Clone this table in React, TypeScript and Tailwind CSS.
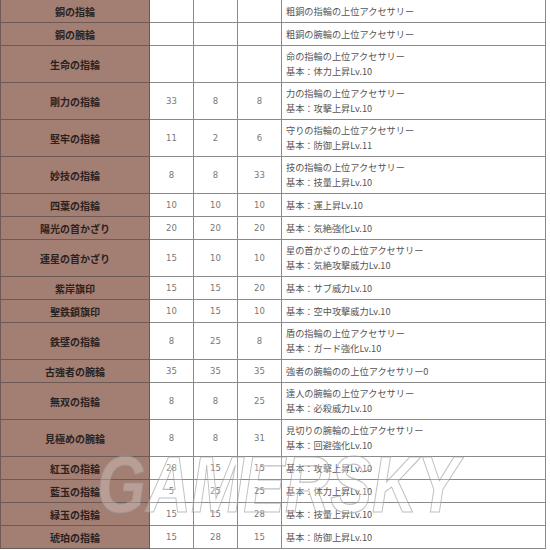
type Row = {
  name: string;
  stats?: [number, number, number];
  lines: string[];
};

const rows: Row[] = [
  { name: "銅の指輪", lines: ["粗銅の指輪の上位アクセサリー"] },
  { name: "銅の腕輪", lines: ["粗銅の腕輪の上位アクセサリー"] },
  { name: "生命の指輪", lines: ["命の指輪の上位アクセサリー", "基本：体力上昇Lv.10"] },
  { name: "剛力の指輪", stats: [33, 8, 8], lines: ["力の指輪の上位アクセサリー", "基本：攻撃上昇Lv.10"] },
  { name: "堅牢の指輪", stats: [11, 2, 6], lines: ["守りの指輪の上位アクセサリー", "基本：防御上昇Lv.11"] },
  { name: "妙技の指輪", stats: [8, 8, 33], lines: ["技の指輪の上位アクセサリー", "基本：技量上昇Lv.10"] },
  { name: "四葉の指輪", stats: [10, 10, 10], lines: ["基本：運上昇Lv.10"] },
  { name: "陽光の首かざり", stats: [20, 20, 20], lines: ["基本：気絶強化Lv.10"] },
  { name: "連星の首かざり", stats: [15, 10, 10], lines: ["星の首かざりの上位アクセサリー", "基本：気絶攻撃威力Lv.10"] },
  { name: "紫岸旗印", stats: [15, 15, 20], lines: ["基本：サブ威力Lv.10"] },
  { name: "聖鉄鎖旗印", stats: [10, 15, 10], lines: ["基本：空中攻撃威力Lv.10"] },
  { name: "鉄壁の指輪", stats: [8, 25, 8], lines: ["盾の指輪の上位アクセサリー", "基本：ガード強化Lv.10"] },
  { name: "古強者の腕輪", stats: [35, 35, 35], lines: ["強者の腕輪のの上位アクセサリー0"] },
  { name: "無双の指輪", stats: [8, 8, 25], lines: ["達人の腕輪の上位アクセサリー", "基本：必殺威力Lv.10"] },
  { name: "見極めの腕輪", stats: [8, 8, 31], lines: ["見切りの腕輪の上位アクセサリー", "基本：回避強化Lv.10"] },
  { name: "紅玉の指輪", stats: [28, 15, 15], lines: ["基本：攻撃上昇Lv.10"] },
  { name: "藍玉の指輪", stats: [5, 25, 25], lines: ["基本：体力上昇Lv.10"] },
  { name: "緑玉の指輪", stats: [15, 15, 28], lines: ["基本：技量上昇Lv.10"] },
  { name: "琥珀の指輪", stats: [15, 28, 15], lines: ["基本：防御上昇Lv.10"] },
];

export default function App() {
  return (
    <div className="relative h-[550px] w-[550px] overflow-hidden bg-white font-['DejaVu_Sans','Noto_Sans_CJK_JP',sans-serif]">
      <table className="-mt-px w-[546px] table-fixed border-collapse">
        <colgroup>
          <col className="w-[149px]" />
          <col className="w-[44px]" />
          <col className="w-[44px]" />
          <col className="w-[44px]" />
          <col />
        </colgroup>
        <tbody>
          {rows.map((r) => {
            const tall = r.lines.length > 1;
            return (
              <tr key={r.name} className={tall ? "h-[37px]" : "h-[23px]"}>
                <td className="border border-[#6e5a55] bg-[#a37e73] p-0 text-center font-['Noto_Sans_CJK_JP',sans-serif] text-[10px] font-bold text-[#2a2220]">
                  {r.name}
                </td>
                {[0, 1, 2].map((i) => (
                  <td
                    key={i}
                    className="border border-[#8a8a8a] p-0 text-center text-[8.5px] text-[#777]"
                  >
                    {r.stats ? r.stats[i] : ""}
                  </td>
                ))}
                <td className="border border-[#8a8a8a] py-0 pr-1 pl-[4px] font-['Noto_Sans_CJK_JP',sans-serif] text-[9.2px] leading-[15px] text-[#555]">
                  {r.lines.map((l) => (
                    <div key={l}>{l}</div>
                  ))}
                </td>
              </tr>
            );
          })}
        </tbody>
      </table>
      {/* watermark */}
      <div className="pointer-events-none absolute top-[440px] left-[95px] h-[80px] w-[370px]">
        <svg viewBox="0 0 370 80" className="h-full w-full">
          <text
            x="2"
            y="72"
            textLength="362"
            lengthAdjust="spacingAndGlyphs"
            fontFamily="Liberation Sans, sans-serif"
            fontSize="80"
            fontWeight="bold"
            fontStyle="italic"
            fill="rgba(255,255,255,0.25)"
            stroke="rgba(150,150,150,0.6)"
            strokeWidth="1.2"
          >
            GAMERSKY
          </text>
        </svg>
      </div>
    </div>
  );
}
